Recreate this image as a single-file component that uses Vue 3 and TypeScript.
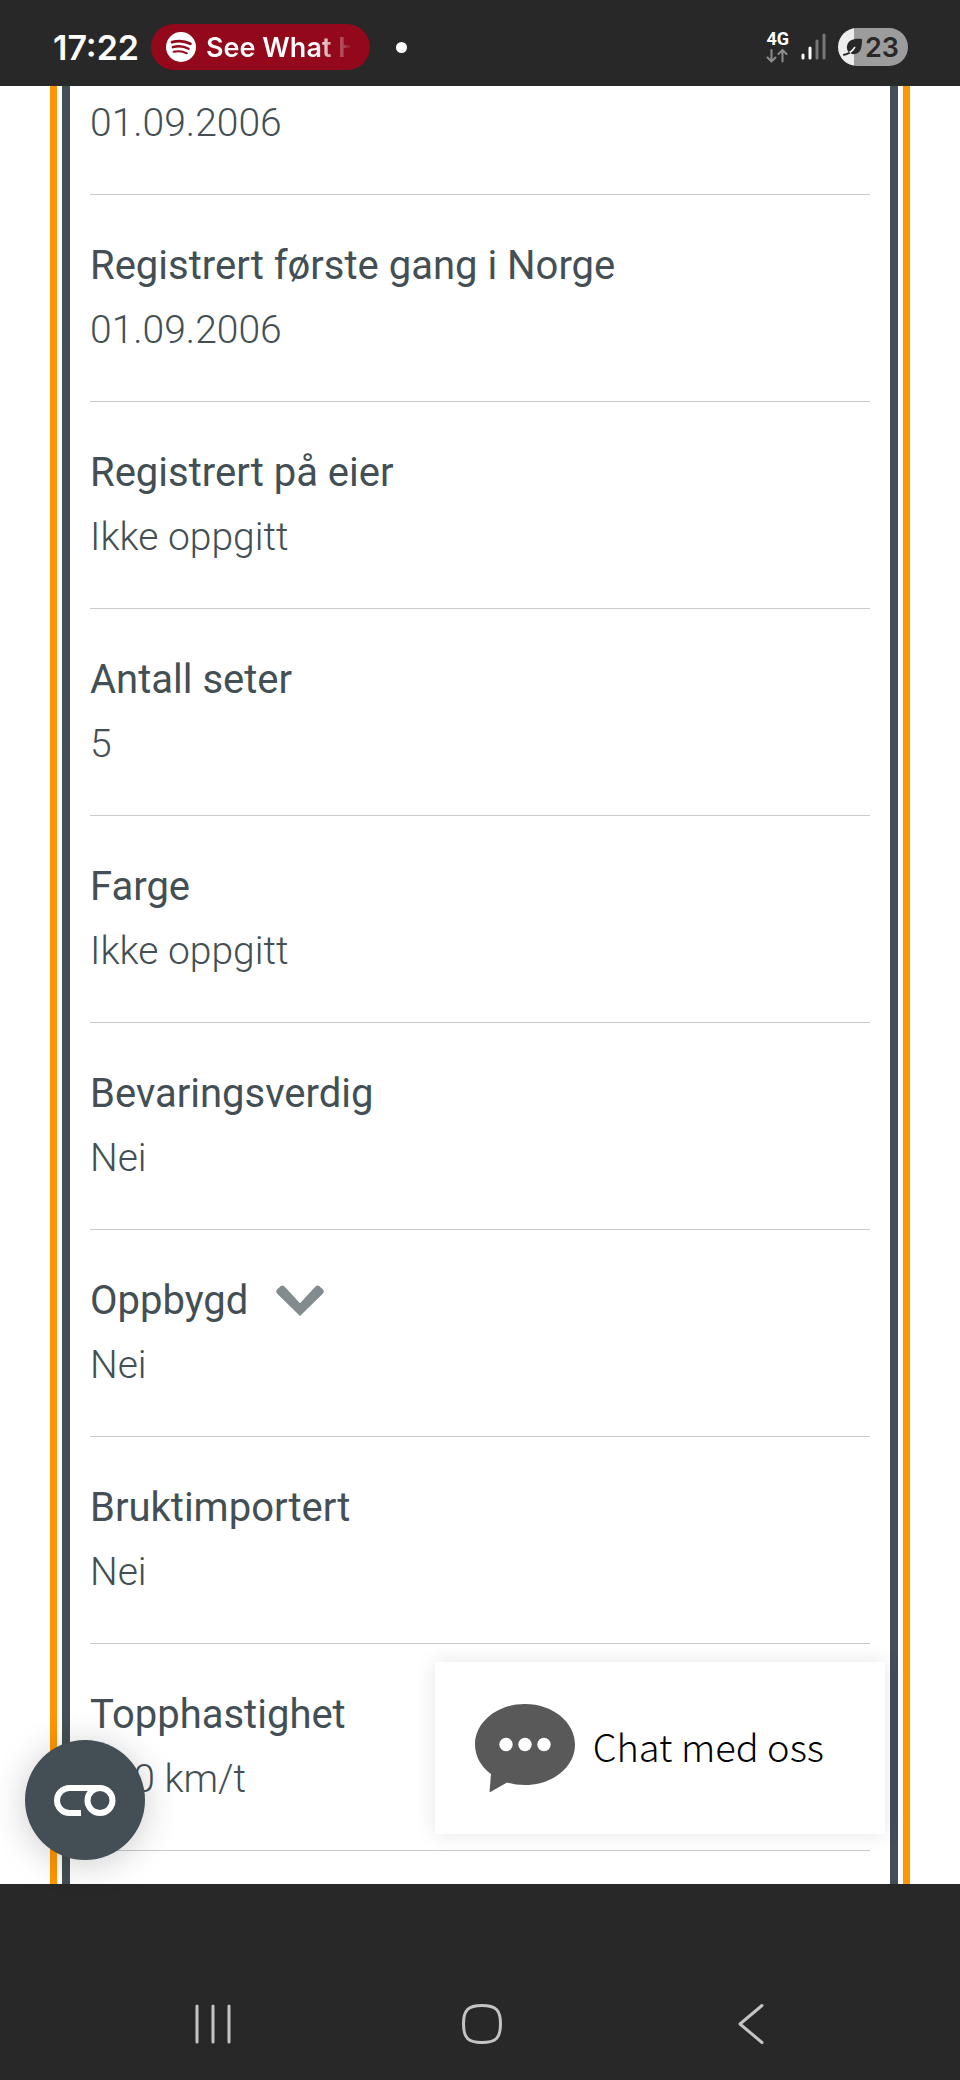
<script setup lang="ts">
interface Fact {
  label?: string
  value: string
  expandable?: boolean
}

const facts: Fact[] = [
  { value: '01.09.2006' },
  { label: 'Registrert første gang i Norge', value: '01.09.2006' },
  { label: 'Registrert på eier', value: 'Ikke oppgitt' },
  { label: 'Antall seter', value: '5' },
  { label: 'Farge', value: 'Ikke oppgitt' },
  { label: 'Bevaringsverdig', value: 'Nei' },
  { label: 'Oppbygd', value: 'Nei', expandable: true },
  { label: 'Bruktimportert', value: 'Nei' },
  { label: 'Topphastighet', value: '170 km/t' },
]
</script>

<template>
  <div class="screen">
    <header class="status">
      <time class="clock">17:22</time>
      <div class="media">
        <svg width="30" height="30" viewBox="0 0 30 30" aria-hidden="true">
          <circle cx="15" cy="15" r="15" fill="#fff" />
          <g fill="none" stroke="#93081b" stroke-linecap="round">
            <path d="M6 10.2C12 8.4 19 9 24.4 11.8" stroke-width="2.8" />
            <path d="M6.8 15.2C12 13.7 18 14.3 22.6 16.8" stroke-width="2.4" />
            <path d="M7.6 19.8C12 18.7 17 19.2 20.8 21.3" stroke-width="2" />
          </g>
        </svg>
        <span class="track">See What H</span>
      </div>
      <span class="dot"></span>
      <div class="network">
        <span>4G</span>
        <svg width="22" height="14" viewBox="0 0 22 14" fill="none" stroke="#8c8c8c" stroke-width="2" stroke-linecap="round" stroke-linejoin="round" aria-hidden="true">
          <path d="M5.500 1V12.500M1.500 8.500l4 4 4-4M16.500 12.500V1M12.500 5l4-4 4 4" />
        </svg>
      </div>
      <svg class="signal" width="25" height="28" viewBox="0 0 25 28" stroke-width="3" stroke-linecap="round" aria-hidden="true">
        <path d="M2 22v3M9 15v10" stroke="#fff" />
        <path d="M16 8v17M23 2v23" stroke="#777" />
      </svg>
      <div class="battery">
        <svg width="20" height="18" viewBox="0 0 20 18" aria-hidden="true">
          <path d="M19 1C11 0 5 2 4 8c-.3 2 .1 4 1.300 6C7 15.500 9.500 16.500 12 16c6-1 7-7 7-15z" fill="#282828" />
          <path d="M1 16.500C5 16 9 14 12 9" fill="none" stroke="#eee" stroke-width="1.600" />
          <path d="M1 16.800C3 16.600 4.500 16 6 15" fill="none" stroke="#282828" stroke-width="2" stroke-linecap="round" />
        </svg>
        <span>23</span>
      </div>
    </header>

    <main class="page">
      <div class="viewport">
        <div class="frame">
          <dl class="facts">
            <div v-for="(fact, i) in facts" :key="i" class="fact">
              <dt v-if="fact.label">
                <span>{{ fact.label }}</span>
                <button v-if="fact.expandable" class="expand" type="button" aria-label="Vis mer om Oppbygd">
                  <svg width="48" height="32" viewBox="0 0 48 32" aria-hidden="true">
                    <path d="M1 8.500Q-.6 6.500 1 4.500L4.500 1.200Q6.500-.4 8.500 1.500L24 18.300 39.500 1.500Q41.500-.4 43.500 1.200L47 4.500Q48.600 6.500 47 8.500L24 31z" fill="#828c8e" />
                  </svg>
                </button>
              </dt>
              <dd>{{ fact.value }}</dd>
            </div>
          </dl>
        </div>
      </div>

      <button class="cookie" type="button" aria-label="Samtykke">
        <svg width="62" height="31" viewBox="0 0 62 31" fill="none" stroke="#fff" stroke-width="6" aria-hidden="true">
          <path d="M46 3H15.500a12.500 12.500 0 0 0 0 25H27" />
          <circle cx="46" cy="15.500" r="12.500" />
        </svg>
      </button>

      <button class="chat" type="button">
        <svg width="100" height="88" viewBox="0 0 100 88" aria-hidden="true">
          <path d="M50 0C77.600 0 100 18 100 40.500S77.600 81 50 81Q40 81 32 78.500L14.500 88.500 16 70C6 63 0 52 0 40.500 0 18 22.400 0 50 0z" fill="#595959" />
          <g fill="#fff">
            <circle cx="31" cy="40.500" r="6.700" />
            <circle cx="50" cy="40.500" r="6.700" />
            <circle cx="69" cy="40.500" r="6.700" />
          </g>
        </svg>
        <span>Chat med oss</span>
      </button>
    </main>

    <nav class="system">
      <button type="button" aria-label="Siste apper">
        <svg width="40" height="42" viewBox="0 0 40 42" fill="none" stroke="#c4c4c4" stroke-width="3" stroke-linecap="round">
          <path d="M4 3v36M20 3v36M36 3v36" />
        </svg>
      </button>
      <button type="button" aria-label="Hjem">
        <svg width="42" height="42" viewBox="0 0 42 42" fill="none" stroke="#c4c4c4" stroke-width="3">
          <path d="M21 2.500C35 2.500 39.500 7 39.500 21S35 39.500 21 39.500 2.500 35 2.500 21 7 2.500 21 2.500z" />
        </svg>
      </button>
      <button type="button" aria-label="Tilbake">
        <svg width="28" height="42" viewBox="0 0 28 42" fill="none" stroke="#c4c4c4" stroke-width="3" stroke-linecap="round" stroke-linejoin="round">
          <path d="M25 2.500L3 21l22 18.500" />
        </svg>
      </button>
    </nav>
  </div>
</template>

<style>
body {
  margin: 0;
}
</style>

<style scoped>
.screen {
  display: flex;
  flex-direction: column;
  height: 100vh;
  background: #fff;
  color: #434f54;
  font-family: Roboto, "Liberation Sans", sans-serif;
}

button {
  display: flex;
  align-items: center;
  justify-content: center;
  margin: 0;
  padding: 0;
  border: 0;
  background: none;
  color: inherit;
  font: inherit;
}

svg {
  display: block;
  flex: none;
}

.status {
  display: flex;
  flex: none;
  align-items: center;
  box-sizing: border-box;
  height: 86px;
  padding: 8px 52px 0 53px;
  background: #282828;
  color: #fff;
  font-family: Inter, "Liberation Sans", sans-serif;
}

.clock {
  font-size: 34px;
  font-weight: 600;
}

.media {
  display: flex;
  align-items: center;
  gap: 10px;
  box-sizing: border-box;
  width: 219px;
  height: 46px;
  margin-left: 12px;
  padding-left: 15px;
  border-radius: 23px;
  background: #93081b;
}

.track {
  background: linear-gradient(to right, #fff 110px, rgb(255 255 255 / 0%) 146px);
  background-clip: text;
  color: transparent;
  font-size: 27px;
  font-weight: 600;
  white-space: nowrap;
}

.dot {
  width: 11px;
  height: 11px;
  margin-left: 26px;
  border-radius: 50%;
  background: #fff;
}

.network {
  display: flex;
  flex-direction: column;
  gap: 2px;
  margin-left: auto;
  font: 700 18px/16px Roboto, sans-serif;
}

.signal {
  margin-left: 12px;
}

.battery {
  display: flex;
  align-items: center;
  gap: 2px;
  box-sizing: border-box;
  width: 70px;
  height: 38px;
  margin-left: 12px;
  padding-left: 5px;
  border-radius: 19px;
  background: linear-gradient(to right, #eee 16px, #9c9c9c 16px);
  color: #282828;
  font-size: 27px;
  font-weight: 600;
}

.page {
  position: relative;
  flex: 1;
  min-height: 0;
}

.viewport {
  display: flex;
  height: 100%;
  padding: 0 50px;
  overflow: hidden;
}

.frame {
  display: flex;
  flex: 1;
  padding: 0 5px;
  border: solid #ff9500;
  border-width: 0 7px;
}

.facts {
  display: flex;
  flex: 1;
  flex-direction: column;
  justify-content: flex-end;
  margin: 0;
  padding: 0 20px 33px;
  border: solid #434f54;
  border-width: 0 8px;
}

.fact {
  padding: 39px 0;
  border-bottom: 1px solid #c8cacb;
  font-size: 39px;
  line-height: 64px;
}

.fact:first-child {
  padding-top: 0;
}

dt {
  display: flex;
  align-items: center;
  gap: 28px;
  font-size: 40px;
  font-weight: 400;
}

dd {
  margin: 0;
  font-weight: 300;
}

.cookie {
  position: absolute;
  bottom: 24px;
  left: 25px;
  width: 120px;
  height: 120px;
  border-radius: 50%;
  background: #434f54;
  box-shadow: 0 4px 36px rgb(0 0 0 / 20%);
}

.chat {
  position: absolute;
  right: 75px;
  bottom: 50px;
  gap: 18px;
  padding: 42px 61px 42px 40px;
  background: #fff;
  box-shadow: 0 0 20px rgb(0 0 0 / 10%);
  color: #000;
  font-family: "Noto Sans CJK SC", sans-serif;
  font-size: 38px;
  font-weight: 300;
  line-height: 60px;
}

.chat span {
  padding-bottom: 4px;
}

.system {
  display: flex;
  flex: none;
  align-items: center;
  box-sizing: border-box;
  height: 196px;
  padding: 84px 75px 0 79px;
  background: #282828;
}

.system button {
  flex: 1;
}
</style>
